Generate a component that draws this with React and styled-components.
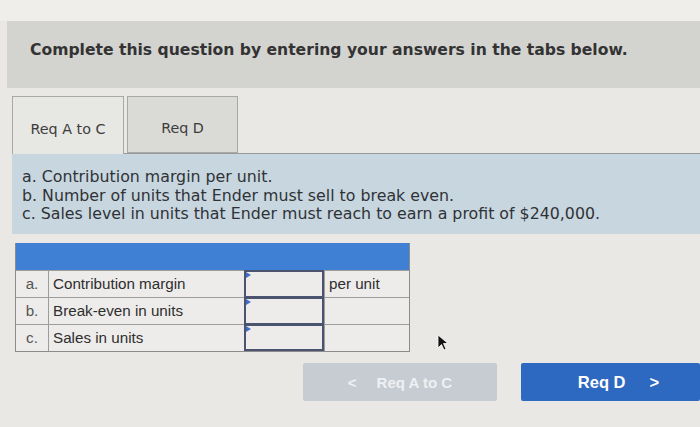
import React from 'react';
import styled, { createGlobalStyle } from 'styled-components';

const GlobalStyle = createGlobalStyle`
  html, body {
    margin: 0;
    padding: 0;
    background: #e9e8e4;
  }
`;

const Page = styled.div`
  position: relative;
  width: 700px;
  height: 427px;
  overflow: hidden;
  padding-top: 21px;
  box-sizing: border-box;
  font-family: "DejaVu Sans", Verdana, sans-serif;
  color: #3a3a3a;
  background: linear-gradient(#efeeea 0, #efeeea 21px, #e9e8e4 21px);
`;

const Banner = styled.div`
  margin-left: 7px;
  height: 67px;
  box-sizing: border-box;
  background: #d3d3d0;
  display: flex;
  align-items: center;
  padding: 0 0 10px 23px;
  font-size: 15.6px;
  font-weight: bold;
  color: #333;
`;

const Body = styled.div`
  margin-left: 12px;
  margin-top: 8px;
`;

const TabBar = styled.div`
  display: flex;
  gap: 3px;
  height: 57px;
  border-bottom: 1px solid #9a9a98;
`;

const Tab = styled.div`
  width: ${(p) => (p.$active ? 112 : 111)}px;
  box-sizing: border-box;
  border: 1px solid #a8a8a6;
  border-bottom: ${(p) => (p.$active ? 'none' : '1px solid #a8a8a6')};
  margin-bottom: ${(p) => (p.$active ? '-1px' : '0')};
  background: ${(p) => (p.$active ? '#e7e7e4' : '#dadad7')};
  display: flex;
  align-items: center;
  justify-content: center;
  font-size: 14.3px;
  color: #3c3c3c;
  padding-top: 6px;
`;

const Info = styled.div`
  background: #c8d6df;
  padding: 14px 10px 12px 10px;
  font-size: 15.8px;
  line-height: 18.5px;
  color: #2f3236;
  height: 80px;
  box-sizing: border-box;
`;

const Grid = styled.div`
  margin: 9px 0 0 3px;
  width: 393px;
  display: grid;
  grid-template-columns: 32px 196px 80px 85px;
  grid-template-rows: 27px repeat(3, 27px);
  font-family: "Liberation Sans", Arial, sans-serif;
  font-size: 15.2px;
  color: #2e2e2e;
  border: 1px solid #8c8c8a;
  border-top: none;
`;

const HeadRow = styled.div`
  grid-column: 1 / -1;
  background: #3f80d4;
`;

const Cell = styled.div`
  background: #edecea;
  border-top: 1px solid #9c9c9a;
  border-left: ${(p) => (p.$first ? 'none' : '1px solid #9c9c9a')};
  display: flex;
  align-items: center;
  padding-left: ${(p) => (p.$center ? '0' : '4px')};
  justify-content: ${(p) => (p.$center ? 'center' : 'flex-start')};
  color: ${(p) => (p.$muted ? '#555' : '#2e2e2e')};
  padding-bottom: 2px;
`;

const InputCell = styled.div`
  position: relative;
  background: #edecea;
  border: 2px solid #4a5470;
  border-bottom-width: ${(p) => (p.$last ? '2px' : '1px')};
`;

const Flag = styled.span`
  position: absolute;
  left: 0;
  top: 0;
  width: 0;
  height: 0;
  border-top: 3px solid transparent;
  border-bottom: 3px solid transparent;
  border-left: 5px solid #3f6fc6;
`;

const NavRow = styled.div`
  display: flex;
  justify-content: flex-end;
  gap: 24px;
  margin-top: 11px;
`;

const NavButton = styled.div`
  height: 38px;
  width: ${(p) => p.$w}px;
  box-sizing: border-box;
  padding-left: ${(p) => (p.$disabled ? 0 : 16)}px;
  background: ${(p) => (p.$disabled ? '#c6ccd2' : '#2d68c1')};
  color: ${(p) => (p.$disabled ? '#eef0f3' : '#ffffff')};
  display: flex;
  align-items: center;
  justify-content: center;
  gap: ${(p) => (p.$disabled ? 20 : 24)}px;
  font-family: "Liberation Sans", Arial, sans-serif;
  font-weight: bold;
  font-size: ${(p) => (p.$disabled ? 15 : 16.5)}px;
  border-radius: 2px;
`;

const Cursor = styled.svg`
  position: absolute;
  left: 437px;
  top: 334px;
`;

const rows = [
  { k: 'a.', label: 'Contribution margin', unit: 'per unit' },
  { k: 'b.', label: 'Break-even in units', unit: '' },
  { k: 'c.', label: 'Sales in units', unit: '' },
];

export default function App() {
  return (
    <>
      <GlobalStyle />
      <Page>
        <Banner>Complete this question by entering your answers in the tabs below.</Banner>
        <Body>
          <TabBar>
            <Tab $active>Req A to C</Tab>
            <Tab>Req D</Tab>
          </TabBar>
          <Info>
            a. Contribution margin per unit.
            <br />
            b. Number of units that Ender must sell to break even.
            <br />
            c. Sales level in units that Ender must reach to earn a profit of $240,000.
          </Info>
          <Grid>
            <HeadRow />
            {rows.map((r, i) => (
              <React.Fragment key={r.k}>
                <Cell $first $center $muted>{r.k}</Cell>
                <Cell>{r.label}</Cell>
                <InputCell $last={i === rows.length - 1}>
                  <Flag />
                </InputCell>
                <Cell>{r.unit}</Cell>
              </React.Fragment>
            ))}
          </Grid>
          <NavRow>
            <NavButton $disabled $w={194}>
              <span>&lt;</span>
              <span>Req A to C</span>
            </NavButton>
            <NavButton $w={179}>
              <span>Req D</span>
              <span>&gt;</span>
            </NavButton>
          </NavRow>
        </Body>
        <Cursor width="14" height="18" viewBox="0 0 14 18">
          <path d="M1 1 L1 14 L4.5 10.5 L7 16 L9 15 L6.5 9.5 L11 9.5 Z" fill="#111" stroke="#fff" strokeWidth="0.8" />
        </Cursor>
      </Page>
    </>
  );
}
